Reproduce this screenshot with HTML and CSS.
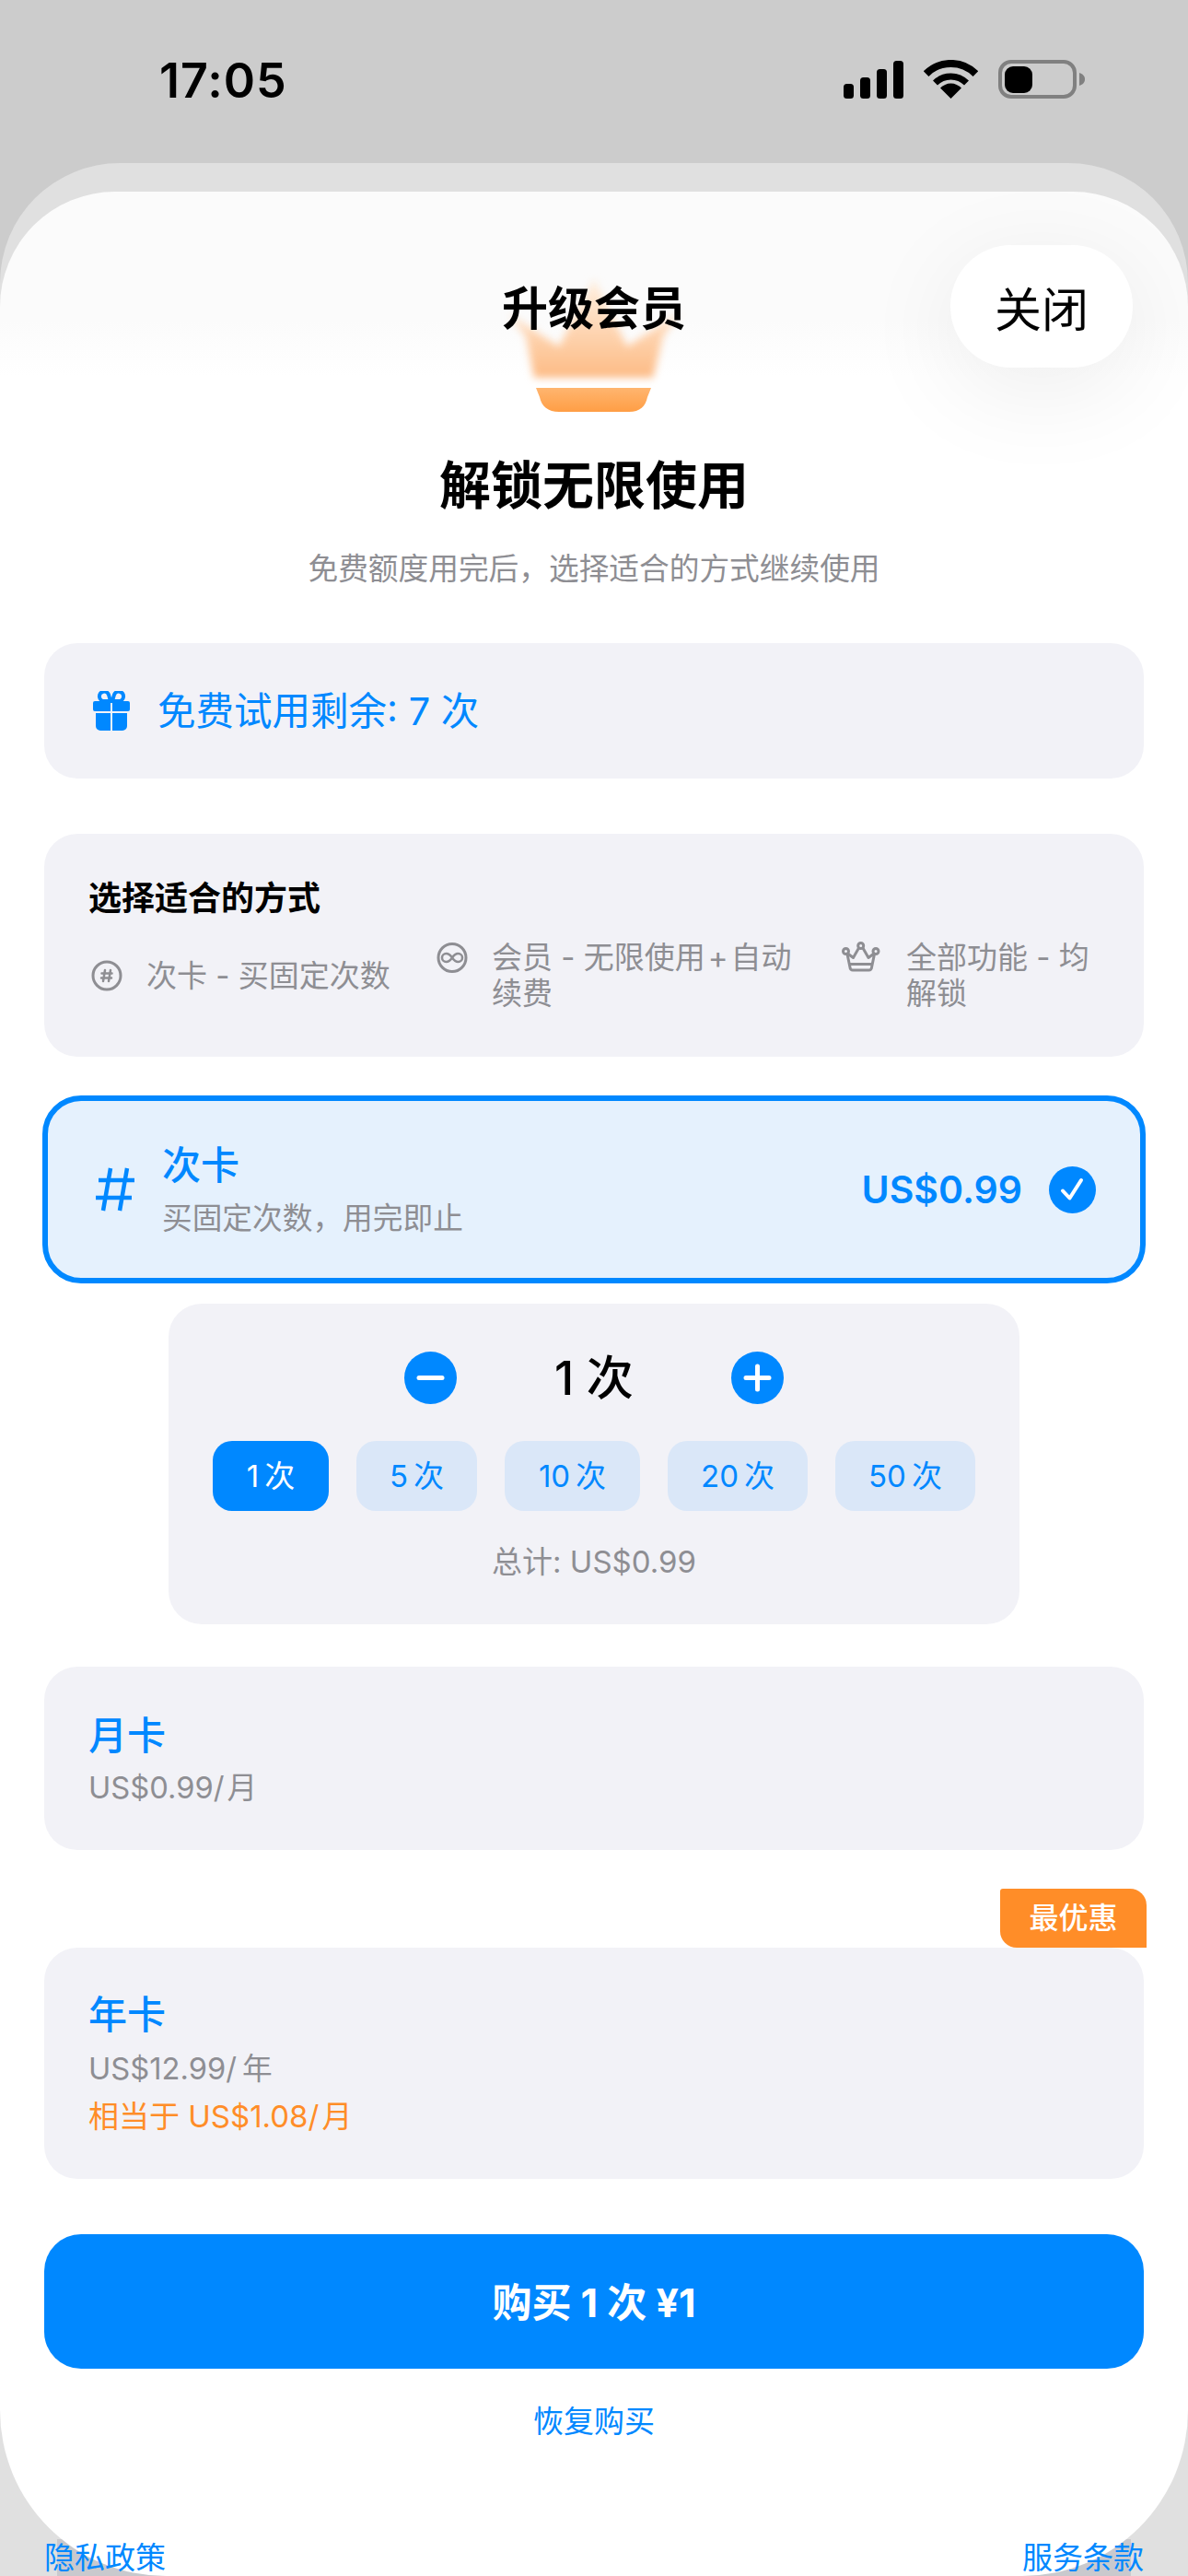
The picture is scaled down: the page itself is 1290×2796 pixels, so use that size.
FILE: index.html
```html
<!DOCTYPE html>
<html lang="zh">
<head>
<meta charset="utf-8">
<title>升级会员</title>
<link rel="stylesheet" href="styles.css">
</head>
<body>
<div class="screen">
  <header class="status">
    <span class="time">17:05</span>
    <div class="status-icons">
      <svg class="ic-signal" viewBox="0 0 65 41"><rect x="0" y="25" width="11" height="16" rx="3.5"/><rect x="18" y="18" width="11" height="23" rx="3.5"/><rect x="36" y="9" width="11" height="32" rx="3.5"/><rect x="54" y="0" width="11" height="41" rx="3.5"/></svg>
      <svg class="ic-wifi" viewBox="0 0 59 42"><path class="wifi-arc w8" d="M2.6 15.1A38 38 0 0 1 56.4 15.1"/><path class="wifi-arc w7" d="M12.5 25A24 24 0 0 1 46.5 25"/><path d="M29.5 42L18 30.5A16 16 0 0 1 41 30.5Z"/></svg>
      <svg class="ic-battery" viewBox="0 0 94 42"><rect class="batt-frame" x="2" y="2" width="81" height="38" rx="12"/><rect x="7" y="7" width="30" height="29" rx="9"/><path class="batt-nub" d="M88 14c3 1 6 3 6 7s-3 6-6 7z"/></svg>
    </div>
  </header>

  <div class="back-sheet">
    <main class="sheet">
      <div class="nav">
        <span></span>
        <h1 class="nav-title">升级会员</h1>
        <button class="close">关闭</button>
      </div>

      <div class="hero-crown">
        <svg class="crown" viewBox="0 0 193 144">
          <defs>
            <linearGradient id="cg" x1="0" y1="0" x2="0" y2="1"><stop offset="0" stop-color="#ffeedd"/><stop offset="0.35" stop-color="#fedfc3"/><stop offset="1" stop-color="#fdbb85"/></linearGradient>
            <linearGradient id="bg" x1="0" y1="0" x2="0" y2="1"><stop offset="0" stop-color="#ffb56f"/><stop offset="1" stop-color="#ff9e45"/></linearGradient>
          </defs>
          <path class="crown-top" fill="url(#cg)" d="M3 38L22 62L31 107H160L171 62L190 36L132 73L96 0L58 73Z"/>
          <path class="crown-band" fill="url(#bg)" d="M33 118H158L154 128C152 138 146 144 134 144H58C46 144 39 138 37 128Z"/>
        </svg>
      </div>

      <h2 class="headline">解锁无限使用</h2>
      <p class="subhead">免费额度用完后，选择适合的方式继续使用</p>

      <section class="card trial">
        <svg class="ic-gift" viewBox="0 0 50 44"><path class="gift-bow" d="M24 11h-7a5.200 5.200 0 1 1 5-7zM26 11h7a5.200 5.200 0 1 0-5-7z"/><path class="gift-fill" d="M7 11h17v11H7a2 2 0 0 1-2-2v-7a2 2 0 0 1 2-2zM26 11h17a2 2 0 0 1 2 2v7a2 2 0 0 1-2 2H26zM8 24h16v19H13a5 5 0 0 1-5-5zM26 24h16v14a5 5 0 0 1-5 5H26z"/></svg>
        <span class="trial-text">免费试用剩余: 7 次</span>
      </section>

      <section class="card intro">
        <h3 class="intro-title">选择适合的方式</h3>
        <div class="intro-row">
          <div class="intro-item item-a">
            <svg class="ic-intro" viewBox="0 0 40 39"><circle class="line-icon" cx="20" cy="19" r="15"/><path class="line-icon thin" d="M18 13l-2 12M24 13l-2 12M14.500 16.500h11M14 21.500h11"/></svg>
            <span class="intro-text">次卡 - 买固定次数</span>
          </div>
          <div class="intro-item item-b">
            <svg class="ic-intro" viewBox="0 0 40 39"><circle class="line-icon" cx="20" cy="19.500" r="15"/><path class="line-icon thin" d="M20 19.500c-2-3-4-4.500-6.500-4.500a4.500 4.500 0 0 0 0 9c2.500 0 4.500-1.500 6.500-4.500s4-4.500 6.500-4.500a4.500 4.500 0 0 1 0 9c-2.500 0-4.500-1.500-6.500-4.500z"/></svg>
            <span class="intro-text">会员 - 无限使用&#8202;+&#8202;自动续费</span>
          </div>
          <div class="intro-item item-c">
            <svg class="ic-intro wide" viewBox="0 0 47 39"><circle class="line-icon" cx="4.500" cy="12.500" r="3"/><circle class="line-icon" cx="20.700" cy="6.500" r="3"/><circle class="line-icon" cx="37" cy="12.500" r="3"/><path class="line-icon" d="M6.500 15l6 4.500 6-10.500M23 9l6 10.500 6-4.500M6 15.500l3 14.500a3 3 0 0 0 3 3h17.500a3 3 0 0 0 3-3l3-14.500M9 26.500h24"/></svg>
            <span class="intro-text">全部功能 - 均解锁</span>
          </div>
        </div>
      </section>

      <section class="card selected">
        <svg class="ic-hash" viewBox="0 0 44 50"><path d="M17 2L9 48M35 2L27 48M4 15H43M1 34H40"/></svg>
        <div class="plan-text">
          <div class="plan-name">次卡</div>
          <div class="plan-sub">买固定次数，用完即止</div>
        </div>
        <span class="plan-price">US$0.99</span>
        <svg class="ic-check" viewBox="0 0 51 51"><circle cx="25.500" cy="25.500" r="25.500"/><path d="M15 26.500l7.500 8L35 15"/></svg>
      </section>

      <section class="stepper">
        <div class="stepper-row">
          <button class="round-btn"><svg viewBox="0 0 57 57"><path d="M16 28.500H41"/></svg></button>
          <span class="count">1 次</span>
          <button class="round-btn"><svg viewBox="0 0 57 57"><path d="M16 28.500H41M28.500 16V41"/></svg></button>
        </div>
        <div class="chips">
          <span class="chip active">1&#8201;次</span>
          <span class="chip">5&#8201;次</span>
          <span class="chip">10&#8201;次</span>
          <span class="chip">20&#8201;次</span>
          <span class="chip">50&#8201;次</span>
        </div>
        <div class="total">总计: US$0.99</div>
      </section>

      <section class="card plan monthly">
        <div class="plan-name">月卡</div>
        <div class="plan-sub">US$0.99/&#8202;月</div>
      </section>

      <section class="card plan yearly">
        <span class="badge">最优惠</span>
        <div class="plan-name">年卡</div>
        <div class="plan-sub">US$12.99/&#8201;年</div>
        <div class="plan-save">相当于 US$1.08/&#8202;月</div>
      </section>

      <button class="buy">购买 1 次 ¥1</button>
      <a class="restore">恢复购买</a>

      <footer class="legal">
        <a class="legal-link">隐私政策</a>
        <a class="legal-link">服务条款</a>
      </footer>
    </main>
  </div>
</div>
</body>
</html>
```

FILE: styles.css
```css
* { box-sizing: border-box; }
html, body { margin: 0; padding: 0; }
body {
  width: 1290px;
  height: 2796px;
  overflow: hidden;
  background: #cccccc;
  font-family: Inter, "Noto Sans CJK SC", sans-serif;
  color: #000;
}
h1, h2, h3, p { margin: 0; font-weight: inherit; font-size: inherit; }
button { border: 0; padding: 0; font: inherit; color: inherit; background: none; }

.screen { width: 1290px; height: 2796px; overflow: hidden; display: flex; flex-direction: column; }

.status { height: 177px; flex: none; display: flex; justify-content: space-between; padding: 60px 112px 0 173px; align-items: flex-start; }
.time { font-size: 52px; font-weight: 600; line-height: 56px; letter-spacing: 1px; }
.status-icons { display: flex; align-items: flex-start; padding-top: 5px; }
.ic-signal { width: 65px; height: 41px; margin-top: 1px; }
.ic-wifi { width: 59px; height: 42px; margin-left: 22px; }
.ic-battery { width: 94px; height: 42px; margin-left: 22px; }
.wifi-arc { fill: none; stroke: #000; }
.w8 { stroke-width: 8; }
.w7 { stroke-width: 7; }
.batt-frame { fill: none; stroke: #808080; stroke-width: 4; }
.batt-nub { fill: #808080; }

.back-sheet { position: relative; flex: 1; background: #e0e0e0; border-radius: 130px 130px 0 0; padding-top: 31px; }
.back-sheet::before { content: ""; position: absolute; left: 62px; right: 62px; bottom: 0; height: 40px; background: #c9c9cd; }
.sheet {
  position: relative;
  height: 2588px;
  background: linear-gradient(#fbfbfb 0, #fbfbfb 140px, #ffffff 200px);
  border-radius: 125px 125px 180px 180px;
  padding-top: 95px;
  display: flex;
  flex-direction: column;
}
.sheet > * { flex: none; }

.nav { position: absolute; left: 0; right: 0; top: 58px; z-index: 2; display: grid; grid-template-columns: 1fr auto 1fr; align-items: center; }
.nav-title { font-size: 50px; font-weight: 600; line-height: 60px; white-space: nowrap; padding-top: 4px; }
.close { justify-self: end; margin-right: 60px; width: 198px; height: 133px; border-radius: 66px; background: #fff; font-size: 51px; box-shadow: 0 24px 110px rgba(0, 0, 0, .075); }

.hero-crown { display: flex; justify-content: center; height: 144px; }
.crown { width: 193px; height: 144px; overflow: visible; }
.crown-top { filter: blur(4px); }
.crown-band { filter: blur(.7px); }

.headline { margin-top: 40px; text-align: center; font-size: 56px; font-weight: 700; line-height: 80px; }
.subhead { margin-top: 27px; text-align: center; font-size: 32.7px; line-height: 46px; color: #8e8e93; }

.card { margin: 0 48px; background: #f2f2f7; border-radius: 36px; }

.trial { margin-top: 58px; height: 147px; display: flex; align-items: center; padding-left: 48px; gap: 25px; color: #0088ff; }
.ic-gift { width: 50px; height: 44px; flex: none; }
.gift-bow { fill: none; stroke: #0088ff; stroke-width: 4; }
.gift-fill { fill: #0088ff; }
.trial-text { font-size: 41.5px; line-height: 56px; }

.intro { margin-top: 60px; height: 242px; padding: 45px 48px 0; }
.intro-title { font-size: 36px; font-weight: 600; line-height: 50px; }
.intro-row { margin-top: 20px; display: flex; gap: 34px; align-items: center; }
.intro-item { display: flex; gap: 23px; align-items: flex-start; }
.item-a { width: 341px; }
.item-b { width: 409px; }
.item-c { width: 280px; }
.ic-intro { width: 40px; height: 39px; flex: none; overflow: visible; }
.ic-intro.wide { width: 47px; }
.line-icon { fill: none; stroke: #8e8e93; stroke-width: 3; stroke-linecap: round; stroke-linejoin: round; }
.line-icon.thin { stroke-width: 2.500; }
.intro-text { font-size: 33px; line-height: 39px; color: #8e8e93; }

.selected {
  margin: 42px 46px 0;
  height: 204px;
  border: 6px solid #0088ff;
  border-radius: 42px;
  background: #e5f1fd;
  display: flex;
  align-items: center;
  padding: 0 48px 0 51px;
}
.ic-hash { width: 44px; height: 50px; flex: none; }
.ic-hash path { fill: none; stroke: #0088ff; stroke-width: 4.5; }
.plan-text { margin-left: 29px; flex: 1; display: flex; flex-direction: column; gap: 6px; }
.plan-name { font-size: 42px; font-weight: 500; line-height: 56px; color: #0088ff; }
.plan-sub { font-size: 32.7px; line-height: 46px; color: #8e8e93; }
.plan-price { font-size: 41px; font-weight: 600; color: #0088ff; }
.ic-check { width: 51px; height: 51px; margin-left: 29px; flex: none; }
.ic-check circle { fill: #0088ff; }
.ic-check path { fill: none; stroke: #fff; stroke-width: 4; stroke-linecap: round; stroke-linejoin: round; }

.stepper { margin: 22px 183px 0; height: 348px; background: #f2f2f7; border-radius: 36px; padding-top: 52px; display: flex; flex-direction: column; align-items: center; }
.stepper-row { display: flex; align-items: center; }
.round-btn { width: 57px; height: 57px; border-radius: 50%; background: #0088ff; display: block; }
.round-btn svg { display: block; width: 57px; height: 57px; }
.round-btn path { fill: none; stroke: #fff; stroke-width: 5; stroke-linecap: round; }
.count { width: 298px; text-align: center; font-size: 51px; font-weight: 500; line-height: 57px; }
.chips { margin-top: 40px; display: grid; grid-template-columns: 126px 131px 147px 152px 152px; gap: 30px; }
.chip { height: 76px; border-radius: 21px; background: #dae7f8; color: #0088ff; font-size: 33px; line-height: 76px; text-align: center; }
.chip.active { background: #0088ff; color: #fff; }
.total { margin-top: 32px; font-size: 33px; line-height: 46px; color: #8e8e93; }

.plan { padding: 47px 48px 0; }
.plan .plan-sub { margin-top: 5px; }
.monthly { margin-top: 46px; height: 199px; }
.yearly { position: relative; margin-top: 106px; height: 251px; padding-top: 45px; }
.yearly .plan-sub { margin-top: 7px; }
.plan-save { margin-top: 6px; font-size: 33px; line-height: 46px; color: #ff8d28; }
.badge { position: absolute; top: -64px; right: -3px; width: 159px; height: 64px; background: #ff8d28; border-radius: 3px 18px 0 18px; color: #fff; font-size: 32px; font-weight: 500; line-height: 64px; text-align: center; }

.buy { margin: 60px 48px 0; height: 146px; border-radius: 40px; background: #0088ff; color: #fff; font-size: 43px; font-weight: 700; padding-bottom: 4px; }
.restore { margin-top: 34px; text-align: center; font-size: 33px; line-height: 46px; color: #0088ff; }
.legal { margin-top: 102px; padding: 0 48px; display: flex; justify-content: space-between; }
.legal-link { font-size: 33px; line-height: 46px; color: #0088ff; }
```
